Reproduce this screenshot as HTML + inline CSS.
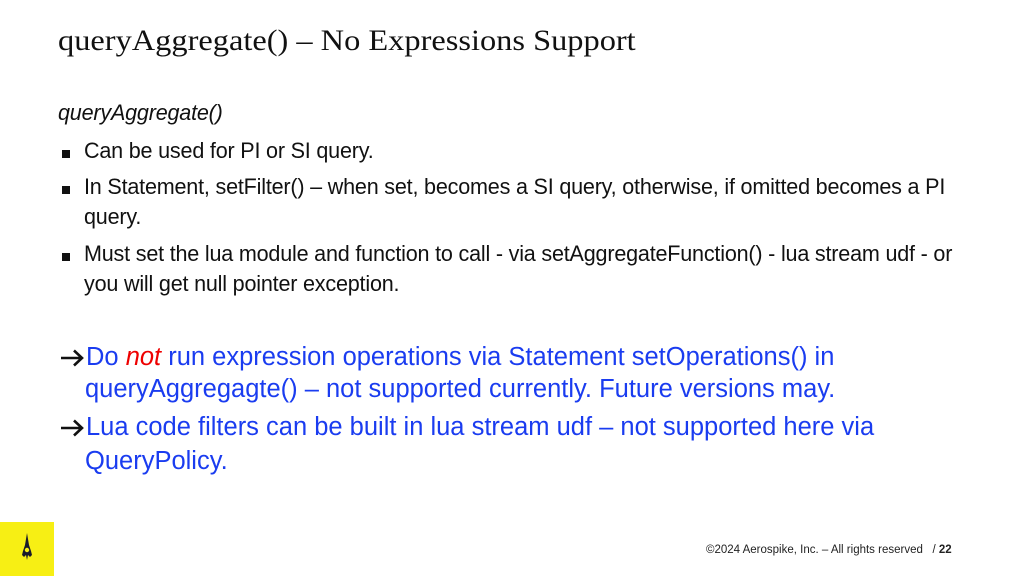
<!DOCTYPE html>
<html><head><meta charset="utf-8"><style>
body{margin:0;width:1024px;height:576px;background:#fff;position:relative;overflow:hidden;font-family:"Liberation Sans",sans-serif;color:#111}
.a{position:absolute;white-space:nowrap}
.t{font-family:"Liberation Serif",serif;font-size:30px;left:58px;top:24px;color:#111;transform-origin:0 0;transform:scaleX(1.08)}
.n{font-size:22px;transform-origin:0 0;transform:scaleX(0.98);letter-spacing:-0.2px}
.sq{position:absolute;width:8px;height:8px;background:#111}
.b{font-size:25.5px;color:#1a3cf0}
.f{font-size:11.5px;color:#222}
.arr{position:absolute;left:60px}
</style></head><body>
<div class="a t">queryAggregate() – No Expressions Support</div>
<div class="a n" style="left:58px;top:100px;font-style:italic">queryAggregate()</div>
<div class="sq" style="left:62px;top:150px"></div>
<div class="a n" style="left:84px;top:138px">Can be used for PI or SI query.</div>
<div class="sq" style="left:62px;top:186px"></div>
<div class="a n" style="left:84px;top:174px">In Statement, setFilter() – when set, becomes a SI query, otherwise, if omitted becomes a PI</div>
<div class="a n" style="left:84px;top:204px">query.</div>
<div class="sq" style="left:62px;top:253px"></div>
<div class="a n" style="left:84px;top:241px">Must set the lua module and function to call - via setAggregateFunction() - lua stream udf - or</div>
<div class="a n" style="left:84px;top:271px">you will get null pointer exception.</div>
<svg class="arr" style="top:349px" width="25" height="18" viewBox="0 0 25 18"><path d="M1 9 H22 M14 1.5 L22 9 L14 16.5" fill="none" stroke="#111" stroke-width="2.6"/></svg>
<div class="a b" style="left:86px;top:343px">Do <i style="color:#e00">not</i> run expression operations via Statement setOperations() in</div>
<div class="a b" style="left:85px;top:375px">queryAggregagte() – not supported currently. Future versions may.</div>
<svg class="arr" style="top:419px" width="25" height="18" viewBox="0 0 25 18"><path d="M1 9 H22 M14 1.5 L22 9 L14 16.5" fill="none" stroke="#111" stroke-width="2.6"/></svg>
<div class="a b" style="left:86px;top:413px">Lua code filters can be built in lua stream udf – not supported here via</div>
<div class="a b" style="left:85px;top:447px">QueryPolicy.</div>
<div style="position:absolute;left:0;top:522px;width:54px;height:54px;background:#f7ef14"></div>
<svg style="position:absolute;left:19px;top:533px" width="16" height="30" viewBox="0 0 16 30"><path d="M8 0 L10 12 L12 18 L13 22 L11 24 L9 22 L8 27 L7 22 L5 24 L3 22 L4 18 L6 12 Z" fill="#1a1a2a"/><circle cx="8" cy="17" r="2.2" fill="#f7ef14"/></svg>
<div class="a f" style="left:706px;top:544px">©2024 Aerospike, Inc. – All rights reserved &nbsp;&nbsp;/ <b>22</b></div>
</body></html>
